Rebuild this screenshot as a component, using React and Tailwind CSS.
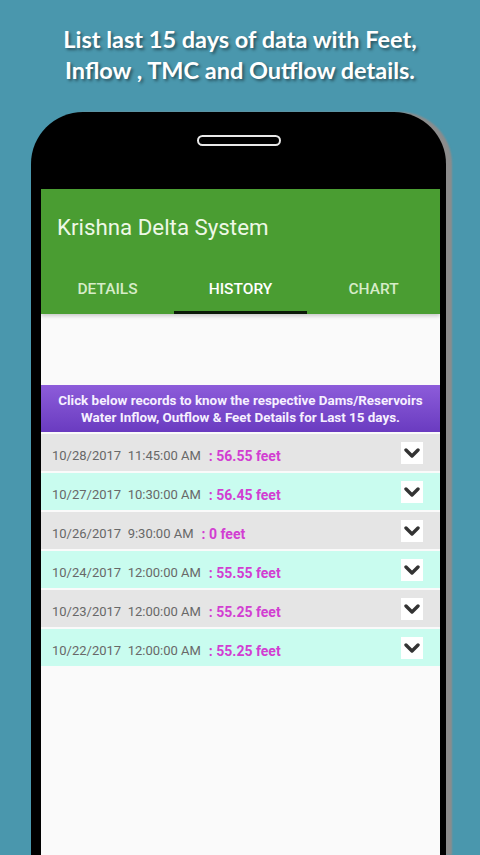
import React from 'react';

const rows = [
  { date: '10/28/2017', time: '11:45:00 AM', feet: '56.55', tint: 'gray' },
  { date: '10/27/2017', time: '10:30:00 AM', feet: '56.45', tint: 'mint' },
  { date: '10/26/2017', time: '9:30:00 AM', feet: '0', tint: 'gray' },
  { date: '10/24/2017', time: '12:00:00 AM', feet: '55.55', tint: 'mint' },
  { date: '10/23/2017', time: '12:00:00 AM', feet: '55.25', tint: 'gray' },
  { date: '10/22/2017', time: '12:00:00 AM', feet: '55.25', tint: 'mint' },
];

const Chevron = () => (
  <div className="w-[22px] h-[22px] bg-white flex items-center justify-center">
    <svg width="16" height="10" viewBox="0 0 16 10">
      <polyline points="2,2 8,8 14,2" fill="none" stroke="#333" strokeWidth="3.4" strokeLinecap="round" strokeLinejoin="round" />
    </svg>
  </div>
);

const HistoryRow = ({ row }) => (
  <div
    className={`mt-[2px] h-[37px] flex items-center justify-between pl-[11px] pr-[17px] ${
      row.tint === 'mint' ? 'bg-[#c9fcef]' : 'bg-[#e5e5e5]'
    }`}
  >
    <div className="flex items-center pt-[7px] font-['Roboto',sans-serif]">
      <span className="text-[13px] text-[#686868] whitespace-pre">{row.date}  {row.time}</span>
      <span className="ml-[8px] text-[14px] text-[#d23ed2] font-bold whitespace-pre">: {row.feet} feet</span>
    </div>
    <Chevron />
  </div>
);

const Tab = ({ label, active }) => (
  <div className="flex flex-col">
    <div className={`flex-1 flex items-center justify-center pt-[12px] ${active ? 'text-white' : 'text-[#d6ecc8]'}`}>
      {label}
    </div>
    <div className={`h-[3px] ${active ? 'bg-[#0b1a08]' : ''}`} />
  </div>
);

export default function App() {
  return (
    <div className="w-[480px] h-[855px] overflow-hidden bg-[#4a97ad] flex flex-col">
      <div className="pt-[24px] text-center text-white font-bold text-[23.5px] leading-[31px] font-['Lato',sans-serif] [text-shadow:2px_2px_3px_rgba(0,0,0,0.45)]">
        <p>List last 15 days of data with Feet,</p>
        <p>Inflow , TMC and Outflow details.</p>
      </div>

      <div className="mt-[26px] ml-[31px] w-[415px] flex-1 bg-black rounded-t-[52px] flex flex-col shadow-[6px_0_2px_#8c8c8c]">
        <div className="h-[77px] flex justify-center pt-[23px]">
          <div className="w-[84px] h-[11px] rounded-full border-2 border-[#e8e8e8]" />
        </div>

        <div className="ml-[10px] w-[399px] flex-1 bg-[#fafafa] flex flex-col">
          <div className="bg-[#4a9d32] shadow-[0_2px_4px_rgba(0,0,0,0.2)] relative z-10">
            <div className="h-[67px] flex items-center pl-[16px] pt-[11px]">
              <h1 className="text-[22.3px] text-[#eef8e6] font-['Roboto',sans-serif]">Krishna Delta System</h1>
            </div>
            <div className="grid grid-cols-3 h-[58px] font-['Roboto',sans-serif] font-medium text-[15.5px]">
              <Tab label="DETAILS" />
              <Tab label="HISTORY" active />
              <Tab label="CHART" />
            </div>
          </div>

          <div className="h-[71px]" />

          <div className="h-[47px] bg-gradient-to-b from-[#8d5cda] to-[#6a3bc0] flex flex-col items-center justify-center text-center text-[#f6f0ff] font-bold text-[13.4px] leading-[17px] font-['Roboto',sans-serif]">
            <p>Click below records to know the respective Dams/Reservoirs</p>
            <p>Water Inflow, Outflow &amp; Feet Details for Last 15 days.</p>
          </div>

          <div className="flex flex-col">
            {rows.map((row) => (
              <HistoryRow key={row.date} row={row} />
            ))}
          </div>
        </div>
      </div>
    </div>
  );
}
